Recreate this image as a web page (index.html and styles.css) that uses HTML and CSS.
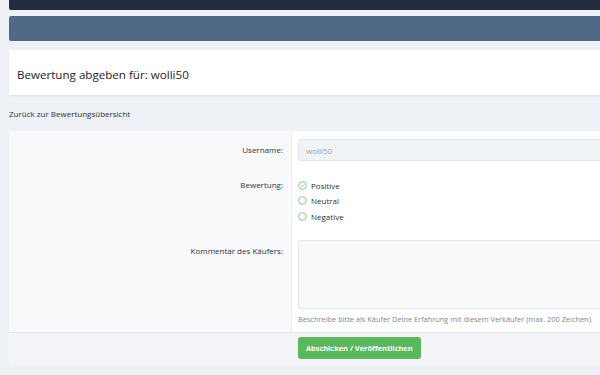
FILE: index.html
```html
<!DOCTYPE html>
<html lang="de">

<head>
    <meta charset="UTF-8">
    <meta name="viewport" content="width=device-width, initial-scale=1.0">
    <title>Bewertung abgeben</title>
    <link rel="stylesheet" href="styles.css">
</head>

<body>
    <div class="page">
        <!-- Header bars -->
        <div class="topBar"></div>
        <div class="navBar"></div>

        <!-- Title -->
        <div class="titleBlock">
            <h1>Bewertung abgeben für: wolli50</h1>
        </div>

        <div class="backLink">
            <a href="">Zurück zur Bewertungsübersicht</a>
        </div>

        <!-- Form -->
        <form class="formBlock">
            <div class="formRows">
                <div class="formRow rowUser">
                    <div class="rowLabel">Username:</div>
                    <div class="rowInput">
                        <input class="textCtrl" type="text" value="wolli50" disabled>
                    </div>
                </div>

                <div class="formRow rowRating">
                    <div class="rowLabel">Bewertung:</div>
                    <div class="rowInput">
                        <ul class="radioList">
                            <li class="checked"><span class="radioIcon"><svg viewBox="0 0 10 10" width="9" height="9"><circle cx="5" cy="5" r="4.3" fill="none" stroke="#6cbd6c" stroke-width="0.9"/><path d="M3 5.1 L4.4 6.4 L7 3.7" fill="none" stroke="#6cbd6c" stroke-width="0.9"/></svg></span>Positive</li>
                            <li><span class="radioIcon"><svg viewBox="0 0 10 10" width="9" height="9"><circle cx="5" cy="5" r="4.3" fill="none" stroke="#6cbd6c" stroke-width="0.9"/></svg></span>Neutral</li>
                            <li><span class="radioIcon"><svg viewBox="0 0 10 10" width="9" height="9"><circle cx="5" cy="5" r="4.3" fill="none" stroke="#6cbd6c" stroke-width="0.9"/></svg></span>Negative</li>
                        </ul>
                    </div>
                </div>

                <div class="formRow rowComment">
                    <div class="rowLabel">Kommentar des Käufers:</div>
                    <div class="rowInput">
                        <textarea class="textCtrl"></textarea>
                        <p class="hint">Beschreibe bitte als Käufer Deine Erfahrung mit diesem Verkäufer (max. 200 Zeichen).</p>
                    </div>
                </div>
            </div>

            <div class="submitRow">
                <div class="submitSpacer"></div>
                <div class="submitButtons">
                    <button type="submit" class="button">Abschicken / Veröffentlichen</button>
                </div>
            </div>
        </form>
    </div>
</body>

</html>
```

FILE: styles.css
```css
body {
    font-family: "Open Sans", Arial, sans-serif;
    margin: 0;
    padding: 0;
    background-color: #eef1f5;
    color: #2f3338;
    overflow: hidden;
}

.page {
    width: 660px;
    margin-left: 9px;
}

/* Header bars */
.topBar {
    height: 10px;
    background-color: #232c3c;
    border-radius: 0 0 0 2px;
}

.navBar {
    height: 25px;
    margin-top: 6px;
    background-color: #4f6987;
    border-radius: 2px 0 0 2px;
}

/* Title */
.titleBlock {
    height: 45px;
    margin-top: 9px;
    background-color: #fff;
    box-shadow: 0 1px 2px rgba(0, 0, 0, 0.08);
    display: flex;
    align-items: center;
    padding-left: 8px;
}

.titleBlock h1 {
    margin: 3px 0 0 0;
    font-size: 11.6px;
    font-weight: normal;
    color: #1f2226;
}

.backLink {
    height: 36px;
    display: flex;
    align-items: center;
}

.backLink a {
    font-size: 8px;
    color: #2f3338;
    text-decoration: none;
}

/* Form */
.formBlock {
    margin: 0;
}

.formRows {
    background-color: #fff;
    border-bottom: 1px solid #dfe4ea;
}

.formRow {
    display: flex;
}

.rowLabel {
    width: 274px;
    flex-shrink: 0;
    background-color: #f8f9fb;
    border-right: 1px solid #eceff3;
    text-align: right;
    padding-right: 8px;
    font-size: 8px;
    line-height: 11px;
    color: #2f3338;
}

.rowInput {
    flex: 1;
    padding-left: 6px;
}

.rowUser .rowLabel {
    padding-top: 13px;
}

.rowUser .rowInput {
    padding-top: 8px;
}

.textCtrl {
    display: block;
    box-sizing: border-box;
    width: 100%;
    height: 22px;
    margin: 0;
    padding: 0 7px;
    border: 1px solid #dfe4ea;
    border-radius: 3px;
    background-color: #f1f4f7;
    font-family: "Open Sans", Arial, sans-serif;
    font-size: 8px;
    color: #98a0a9;
}

.rowRating .rowLabel {
    padding-top: 18px;
}

.rowRating .rowInput {
    padding-top: 17px;
}

.radioList {
    list-style: none;
    margin: 0;
    padding: 0;
}

.radioList li {
    display: flex;
    align-items: center;
    height: 15.3px;
    font-size: 8px;
    color: #2f3338;
}

.radioIcon {
    display: inline-flex;
    width: 9px;
    height: 9px;
    margin-right: 4px;
}

.rowComment .rowLabel {
    padding-top: 21px;
}

.rowComment .rowInput {
    padding-top: 16px;
    padding-bottom: 3px;
}

.rowComment textarea {
    height: 69px;
    background-color: #f8f9fb;
    resize: none;
}

.hint {
    margin: 0;
    height: 20px;
    display: flex;
    align-items: center;
    font-size: 7.4px;
    color: #7f8893;
}

.submitRow {
    display: flex;
    height: 32px;
    background-color: #f2f4f7;
}

.submitSpacer {
    width: 283px;
    flex-shrink: 0;
}

.submitButtons {
    display: flex;
    align-items: flex-start;
    padding: 4px 0 0 6px;
}

.button {
    height: 22px;
    padding: 0 8px;
    border: 0;
    border-radius: 3px;
    background-color: #5cb85c;
    font-family: "Open Sans", Arial, sans-serif;
    font-size: 7.4px;
    font-weight: bold;
    color: #fff;
}
```
